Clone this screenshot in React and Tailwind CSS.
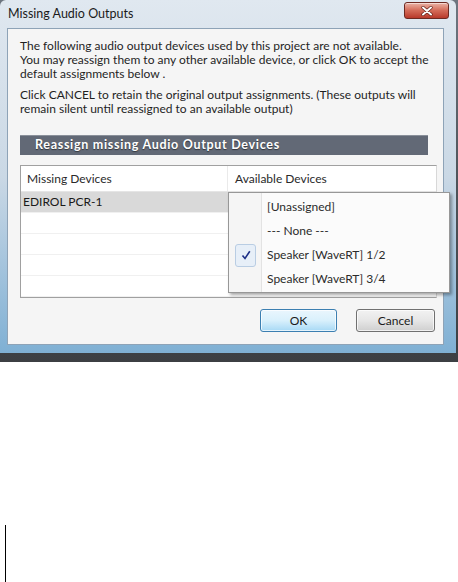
import React from "react";

const font = { fontFamily: 'Lato, "Noto Sans", sans-serif' };

function CloseButton() {
  return (
    <div className="mt-[2px] mr-[7px] w-[45px] h-[17px] rounded-[3px] border border-[#6d2a22] bg-gradient-to-b from-[#e9b3a6] via-[#d36a58] to-[#b8382a] flex items-center justify-center shadow-[inset_0_1px_0_rgba(255,255,255,0.5)]">
      <svg width="12" height="10" viewBox="0 0 12 10">
        <path d="M2 1.5 L10 8.5 M10 1.5 L2 8.5" stroke="#5a1a12" strokeWidth="3.2" strokeLinecap="round" />
        <path d="M2 1.5 L10 8.5 M10 1.5 L2 8.5" stroke="#ffffff" strokeWidth="2" strokeLinecap="round" />
      </svg>
    </div>
  );
}

function Row({ selected, children }) {
  return (
    <div className={"h-[21px] flex items-center border-b border-[#f0f0f0] " + (selected ? "bg-[#d9d9d9]" : "")}>
      <span className="pl-[2px] text-[12px] text-[#1a1a1a]">{children}</span>
    </div>
  );
}

function MenuItem({ checked, children }) {
  return (
    <div className="h-[24px] flex items-center">
      <div className="w-[33px] h-full flex items-center justify-center">
        {checked && (
          <div className="w-[21px] h-[23px] rounded-[3px] border border-[#b9cde3] bg-[#e7eff8] flex items-center justify-center">
            <svg width="10" height="10" viewBox="0 0 10 10">
              <path d="M1.5 5.5 L4 8.5 L8.8 1.2" fill="none" stroke="#1d2f86" strokeWidth="1.6" />
            </svg>
          </div>
        )}
      </div>
      <span className="pl-[5px] text-[12px] text-[#2b2b2b] whitespace-nowrap">{children}</span>
    </div>
  );
}

export default function App() {
  return (
    <div className="w-[458px] h-[582px] bg-white overflow-hidden" style={font}>
      <div className="h-[362px] bg-gradient-to-b from-[#6e7680] via-[#4f545a] to-[#3c3f43] pr-[2px]">
        <div className="w-[456px] h-[353px] rounded-t-[6px] bg-gradient-to-b from-[#e0e8f0] via-[#cad8e5] to-[#7fb0d4] flex flex-col">
          <div className="h-[28px] flex items-start justify-between">
            <div className="pl-[8px] pt-[6px] text-[12.5px] leading-[16px] text-[#1b1b1b]">Missing Audio Outputs</div>
            <CloseButton />
          </div>
          <div className="ml-[7px] mr-[12px] h-[317px] border border-[#8ea3b7] bg-[#f5f5f5] flex flex-col pl-[12px] pr-[8px] pt-[10px] whitespace-nowrap">
            <p className="text-[12px] leading-[14px] text-[#1f1f1f]">
              The following audio output devices used by this project are not available.
              <br />
              You may reassign them to any other available device, or click OK to accept the
              <br />
              default assignments below .
            </p>
            <p className="mt-[7px] text-[12px] leading-[14px] text-[#1f1f1f]">
              Click CANCEL to retain the original output assignments. (These outputs will
              <br />
              remain silent until reassigned to an available output)
            </p>
            <div className="mt-[19px] w-[408px] h-[20px] bg-[#626976] border-t border-[#8a909a] flex items-center pl-[15px]">
              <span className="text-[12.5px] font-bold text-white tracking-[0.7px] [text-shadow:0_1px_1px_rgba(0,0,0,0.5)]">
                Reassign missing Audio Output Devices
              </span>
            </div>
            <div className="relative mt-[10px] w-[417px] h-[133px] border border-[#a0a0a0] border-r-[#d8d8d8] bg-white">
              <div className="h-[26px] flex items-center border-b border-[#e5e5e5] text-[12px] text-[#2a2a2a]">
                <div className="w-[207px] pl-[6px] border-r border-[#eaeaea] h-full flex items-center">Missing Devices</div>
                <div className="pl-[7px]">Available Devices</div>
              </div>
              <Row selected>EDIROL PCR-1</Row>
              <Row />
              <Row />
              <Row />
              <Row />
              <div className="absolute left-[207px] top-[26px] w-[222px] h-[101px] bg-[#fbfbfb] border border-[#979797] shadow-[2px_2px_3px_rgba(0,0,0,0.35)] pt-[2px]">
                <div className="absolute left-0 top-0 bottom-0 w-[32px] bg-[#f5f5f5]" />
                <div className="absolute left-[32px] top-0 bottom-0 w-px bg-[#e3e3e3]" />
                <div className="relative">
                  <MenuItem>[Unassigned]</MenuItem>
                  <MenuItem>--- None ---</MenuItem>
                  <MenuItem checked>Speaker [WaveRT] 1/2</MenuItem>
                  <MenuItem>Speaker [WaveRT] 3/4</MenuItem>
                </div>
              </div>
            </div>
            <div className="mt-[11px] flex justify-end gap-[19px]">
              <button className="w-[77px] h-[23px] rounded-[3px] border border-[#3c7fb1] bg-gradient-to-b from-[#eaf6fd] via-[#d9f0fc] to-[#a7d9f5] text-[12px] text-[#1a1a1a] shadow-[inset_0_0_0_1px_rgba(255,255,255,0.7)]">
                OK
              </button>
              <button className="w-[79px] h-[23px] rounded-[3px] border border-[#707070] bg-gradient-to-b from-[#f2f2f2] via-[#e6e6e6] to-[#cfcfcf] text-[12px] text-[#1a1a1a] shadow-[inset_0_0_0_1px_rgba(255,255,255,0.7)]">
                Cancel
              </button>
            </div>
          </div>
        </div>
      </div>
      <div className="ml-[5px] mt-[163px] w-px h-[57px] bg-black" />
    </div>
  );
}
